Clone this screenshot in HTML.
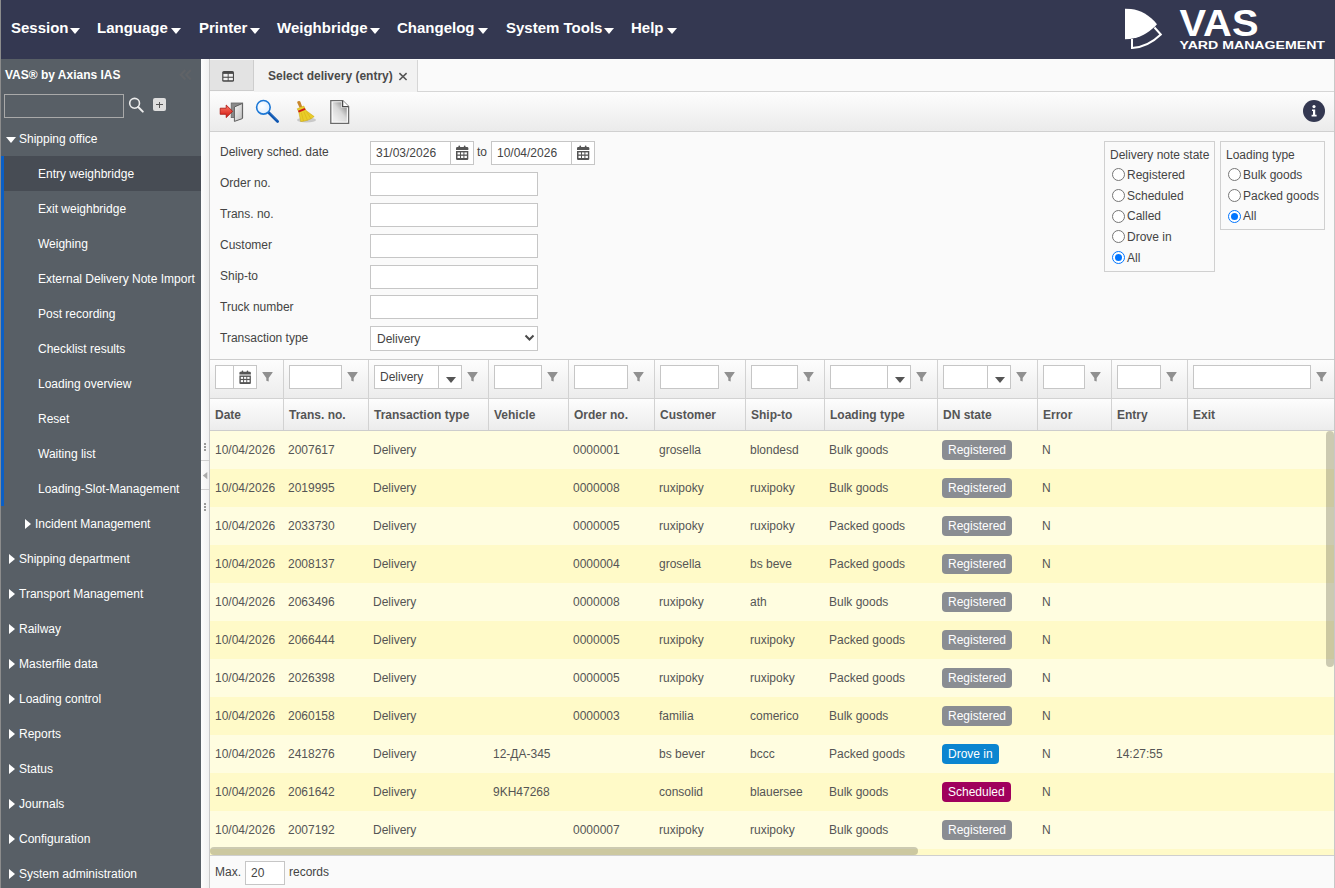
<!DOCTYPE html>
<html><head><meta charset="utf-8">
<style>
*{box-sizing:border-box}
html,body{margin:0;padding:0}
body{width:1335px;height:888px;overflow:hidden;position:relative;font-family:"Liberation Sans",sans-serif;font-size:12px;color:#333;background:#fafafa}
.a{position:absolute}
.t{position:absolute;white-space:nowrap;line-height:12px}
#top{left:0;top:0;width:1335px;height:59px;background:#343851}
.mi{position:absolute;top:20px;font-weight:bold;font-size:15px;line-height:15px;color:#fff;white-space:nowrap}
.car{position:absolute;top:28px;width:0;height:0;border-left:5.5px solid transparent;border-right:5.5px solid transparent;border-top:6px solid #fff}
#side{left:0;top:59px;width:201px;height:829px;background:#585f66}
.si{position:absolute;left:0;width:201px;height:35px;color:#fff;font-size:12px;line-height:12px}
.si span{position:absolute;top:12px;white-space:nowrap}
.trd{position:absolute;width:0;height:0;border-left:5px solid transparent;border-right:5px solid transparent;border-top:6px solid #fff}
.trr{position:absolute;width:0;height:0;border-top:5px solid transparent;border-bottom:5px solid transparent;border-left:6px solid #fff}
.inp{position:absolute;background:#fff;border:1px solid #c6c6c6;height:24px}
.funnel{position:absolute;top:372px;width:11px;height:10px}
.hd{position:absolute;top:409px;font-weight:bold;color:#555;line-height:12px;white-space:nowrap}
.row{position:absolute;left:210px;width:1124px;height:38px}
.row span{position:absolute;top:13px;white-space:nowrap;line-height:12px;color:#555}
.bd{position:absolute;top:9px;height:20px;border-radius:4px;color:#fff;line-height:20px;padding:0 6px;white-space:nowrap}
.lbl{position:absolute;left:220px;line-height:12px;white-space:nowrap;color:#444}
.rad{position:absolute;width:13px;height:13px;border-radius:50%;border:1px solid #767676;background:#fff}
.rad.on{border:1px solid #0075ff;background:#fff}
.rad.on:after{content:"";position:absolute;left:2px;top:2px;width:7px;height:7px;border-radius:50%;background:#0075ff}
</style></head><body>

<!-- top bar -->
<div id="top" class="a">
  <div class="mi" style="left:11px">Session</div><div class="car" style="left:70px"></div>
  <div class="mi" style="left:97px">Language</div><div class="car" style="left:171px"></div>
  <div class="mi" style="left:199px">Printer</div><div class="car" style="left:250px"></div>
  <div class="mi" style="left:277px">Weighbridge</div><div class="car" style="left:370px"></div>
  <div class="mi" style="left:397px">Changelog</div><div class="car" style="left:478px"></div>
  <div class="mi" style="left:506px">System Tools</div><div class="car" style="left:604px"></div>
  <div class="mi" style="left:631px">Help</div><div class="car" style="left:667px"></div>
  <svg class="a" style="left:1115px;top:0" width="220" height="59" viewBox="1115 0 220 59">
    <path d="M1132,39 L1132,48 C1142,47.5 1153,42 1160.8,34.5 L1154.5,27.5" fill="none" stroke="#fff" stroke-width="2"/>
    <path d="M1125,8.8 L1131,9 C1140,10 1150,15 1157,24.3 L1155,26.5 C1148,33 1140,38 1130,38.9 L1125,39.2 Z" fill="#fff"/>
  </svg>
  <svg class="a" style="left:1170px;top:0" width="165" height="59" viewBox="1170 0 165 59"><text x="1179.5" y="35.6" fill="#fff" font-family="Liberation Sans" font-weight="bold" font-size="36" textLength="79" lengthAdjust="spacingAndGlyphs">VAS</text><text x="1179.5" y="48.6" fill="#fff" font-family="Liberation Sans" font-weight="bold" font-size="11.3" textLength="145.5" lengthAdjust="spacingAndGlyphs">YARD MANAGEMENT</text></svg>
  
</div>

<!-- left 1px border -->
<div class="a" style="left:0;top:0;width:1px;height:888px;background:#8c8c8c;z-index:5"></div>

<!-- sidebar -->
<div id="side" class="a">
  <div class="t" style="left:5px;top:10px;font-weight:bold;color:#fff">VAS® by Axians IAS</div>
  <svg class="a" style="left:176px;top:7px" width="20" height="18" viewBox="176 66 20 18"><path d="M185.4,70 L180.8,74.8 L185.4,79.4 M190.8,70 L186.2,74.8 L190.8,79.4" fill="none" stroke="#606367" stroke-width="2.1"/></svg>
  <div class="a" style="left:4px;top:35px;width:120px;height:24px;border:1px solid #a9a9a9"></div>
  <svg class="a" style="left:128px;top:38px" width="16" height="16" viewBox="0 0 16 16"><circle cx="6.6" cy="6.3" r="4.9" fill="none" stroke="#ececec" stroke-width="1.6"/><path d="M10.2,10 L14.8,14.6" stroke="#ececec" stroke-width="2" stroke-linecap="round"/></svg>
  <div class="a" style="left:153px;top:39px;width:13px;height:13px;border-radius:2px;background:#dedede"></div>
  <div class="a" style="left:156px;top:45px;width:7px;height:1px;background:#555"></div>
  <div class="a" style="left:159px;top:43px;width:1px;height:6px;background:#555"></div>
</div>
<div id="menu" class="a" style="left:0;top:0">
  <div class="trd" style="left:6px;top:137px"></div>
  <div class="si" style="top:121px"><span style="left:19px">Shipping office</span></div>
  <div class="a" style="left:1px;top:156px;width:3px;height:350px;background:#0a5fc6"></div>
  <div class="si" style="top:156px;background:#474c54;left:4px;width:197px"><span style="left:34px">Entry weighbridge</span></div>
  <div class="si" style="top:191px"><span style="left:38px">Exit weighbridge</span></div>
  <div class="si" style="top:226px"><span style="left:38px">Weighing</span></div>
  <div class="si" style="top:261px"><span style="left:38px">External Delivery Note Import</span></div>
  <div class="si" style="top:296px"><span style="left:38px">Post recording</span></div>
  <div class="si" style="top:331px"><span style="left:38px">Checklist results</span></div>
  <div class="si" style="top:366px"><span style="left:38px">Loading overview</span></div>
  <div class="si" style="top:401px"><span style="left:38px">Reset</span></div>
  <div class="si" style="top:436px"><span style="left:38px">Waiting list</span></div>
  <div class="si" style="top:471px"><span style="left:38px">Loading-Slot-Management</span></div>
  <div class="trr" style="left:25px;top:519px"></div>
  <div class="si" style="top:506px"><span style="left:35px">Incident Management</span></div>
  <div class="trr" style="left:9px;top:554px"></div>
  <div class="si" style="top:541px"><span style="left:19px">Shipping department</span></div>
  <div class="trr" style="left:9px;top:589px"></div>
  <div class="si" style="top:576px"><span style="left:19px">Transport Management</span></div>
  <div class="trr" style="left:9px;top:624px"></div>
  <div class="si" style="top:611px"><span style="left:19px">Railway</span></div>
  <div class="trr" style="left:9px;top:659px"></div>
  <div class="si" style="top:646px"><span style="left:19px">Masterfile data</span></div>
  <div class="trr" style="left:9px;top:694px"></div>
  <div class="si" style="top:681px"><span style="left:19px">Loading control</span></div>
  <div class="trr" style="left:9px;top:729px"></div>
  <div class="si" style="top:716px"><span style="left:19px">Reports</span></div>
  <div class="trr" style="left:9px;top:764px"></div>
  <div class="si" style="top:751px"><span style="left:19px">Status</span></div>
  <div class="trr" style="left:9px;top:799px"></div>
  <div class="si" style="top:786px"><span style="left:19px">Journals</span></div>
  <div class="trr" style="left:9px;top:834px"></div>
  <div class="si" style="top:821px"><span style="left:19px">Configuration</span></div>
  <div class="trr" style="left:9px;top:869px"></div>
  <div class="si" style="top:856px"><span style="left:19px">System administration</span></div>
</div>

<!-- splitter -->
<div class="a" style="left:201px;top:59px;width:8px;height:829px;background:linear-gradient(90deg,#fdfdfd,#f1f1f1)"></div>
<svg class="a" style="left:201px;top:436px" width="8" height="80" viewBox="201 436 8 80">
<g fill="#9a9a9a"><rect x="204" y="443" width="2" height="2"/><rect x="204" y="446" width="2" height="2"/><rect x="204" y="449" width="2" height="2"/>
<rect x="204" y="503" width="2" height="2"/><rect x="204" y="506" width="2" height="2"/><rect x="204" y="509" width="2" height="2"/></g>
<rect x="201" y="460" width="8" height="1" fill="#cfcfcf"/><rect x="201" y="489" width="8" height="1" fill="#cfcfcf"/>
<path d="M202.8,475.6 L207.3,472 L207.3,479.2 Z" fill="#aaaaaa"/>
</svg>
<div class="a" style="left:209px;top:59px;width:1px;height:829px;background:#c8c8c8"></div>

<!-- content -->
<div id="content">
<svg width="0" height="0" style="position:absolute"><defs>
<symbol id="calico" viewBox="0 0 14 15"><rect x="3.4" y="0.6" width="1.7" height="2.4" rx="0.8" fill="#555"/><rect x="8.8" y="0.6" width="1.7" height="2.4" rx="0.8" fill="#555"/><path d="M1,3.2 Q1,2 2.2,2 L12.1,2 Q13.3,2 13.3,3.2 L13.3,4.9 L1,4.9 Z" fill="#555"/><path d="M1,5.9 L13.3,5.9 L13.3,13.8 Q13.3,15 12.1,15 L2.2,15 Q1,15 1,13.8 Z" fill="#555"/><g fill="#fff"><rect x="2.5" y="7.4" width="2.5" height="2.1"/><rect x="6" y="7.4" width="2.4" height="2.1"/><rect x="9.4" y="7.4" width="2.5" height="2.1"/><rect x="2.5" y="10.8" width="2.5" height="2.2"/><rect x="6" y="10.8" width="2.4" height="2.2"/><rect x="9.4" y="10.8" width="2.5" height="2.2"/></g></symbol>
<symbol id="funico" viewBox="0 0 11 10"><path d="M0.6,0 L10.4,0 Q11,0 10.6,0.6 L6.7,6 L6.7,9.6 L4.3,8.8 L4.3,6 L0.4,0.6 Q0,0 0.6,0 Z" fill="#909090"/></symbol>
</defs></svg>
<div class="a" style="left:210px;top:59px;width:1124px;height:32px;background:#fafafa"></div>
<div class="a" style="left:210px;top:60px;width:44px;height:31px;background:#e3e3e3;border-right:1px solid #cdcdcd;border-bottom:1px solid #cdcdcd"></div>
<svg class="a" style="left:222px;top:70px" width="13" height="13" viewBox="0 0 13 13"><rect x="0.2" y="0.9" width="11.8" height="10.9" rx="1.6" fill="#4a4a4a"/><rect x="1.4" y="3.9" width="4.3" height="2.8" fill="#f2f2f2"/><rect x="6.6" y="3.9" width="4.3" height="2.8" fill="#f2f2f2"/><rect x="1.4" y="7.8" width="4.3" height="2.4" fill="#f2f2f2"/><rect x="6.6" y="7.8" width="4.3" height="2.4" fill="#f2f2f2"/></svg>
<div class="a" style="left:254px;top:60px;width:164px;height:32px;background:#f2f2f2;border-right:1px solid #d6d6d6"></div>
<div class="t" style="left:268px;top:70px;font-weight:bold;color:#4a4a4a">Select delivery (entry)</div>
<svg class="a" style="left:396px;top:70px" width="14" height="14" viewBox="396 70 14 14"><path d="M399.4,73.2 L406.6,80 M406.6,73.2 L399.4,80" stroke="#555" stroke-width="1.6"/></svg>
<div class="a" style="left:418px;top:91px;width:916px;height:1px;background:#d6d6d6"></div>
<div class="a" style="left:210px;top:92px;width:1124px;height:39px;background:linear-gradient(#fdfdfd,#ebebeb)"></div>
<div class="a" style="left:210px;top:131px;width:1124px;height:1px;background:#d0d0d0"></div>
<svg class="a" style="left:218px;top:100px" width="28" height="24" viewBox="218 100 28 24">
<defs><linearGradient id="ar" x1="0" y1="0" x2="0" y2="1"><stop offset="0" stop-color="#ff7a6a"/><stop offset="1" stop-color="#d0150c"/></linearGradient>
<linearGradient id="dl" x1="0" y1="0" x2="1" y2="1"><stop offset="0" stop-color="#f6f6f6"/><stop offset="1" stop-color="#bdbdbd"/></linearGradient></defs>
<rect x="231.2" y="103" width="11.5" height="14.6" fill="#8a8a8a" stroke="#666" stroke-width="0.8"/>
<path d="M234.4,107 L242.4,103.4 L242.4,118.6 L234.4,121.4 Z" fill="url(#dl)" stroke="#5e5e5e" stroke-width="1"/>
<path d="M220.2,108.2 L226.2,108.2 L226.2,105 L232.6,111.3 L226.2,117.6 L226.2,114.3 L220.2,114.3 Z" fill="url(#ar)" stroke="#a8100a" stroke-width="0.8"/>
</svg>
<svg class="a" style="left:252px;top:96px" width="30" height="30" viewBox="252 96 30 30">
<defs><radialGradient id="gl" cx="0.4" cy="0.4" r="0.6"><stop offset="0" stop-color="#ffffff"/><stop offset="1" stop-color="#dfefff"/></radialGradient></defs>
<path d="M268.3,112.3 L277.6,121.6" stroke="#0d55b0" stroke-width="2.8" stroke-linecap="round"/><path d="M270,113.2 L277,120.2" stroke="#5a9ae0" stroke-width="0.7" opacity="0.6"/>
<circle cx="263.4" cy="107.3" r="6.8" fill="url(#gl)" stroke="#1d78d6" stroke-width="1.6"/>
</svg>
<svg class="a" style="left:292px;top:98px" width="28" height="28" viewBox="292 98 28 28">
<ellipse cx="306.5" cy="120" rx="9.5" ry="2.6" fill="#9a9a9a" opacity="0.45"/>
<path d="M297.5,101.5 C298.5,100.5 300,101 300.5,102 L302.2,106.8 L299.6,107.8 L297.4,103 C297.1,102.4 297.1,101.9 297.5,101.5 Z" fill="#c8862c"/>
<path d="M297.2,108.8 L303.8,106 L306,110.5 L314.2,116.6 C311,119.4 305,121.6 300.6,121.6 L298.8,112 Z" fill="#e9cc2a" stroke="#c9a40c" stroke-width="0.5"/>
<path d="M298,110.8 L304.6,107.9 L305.5,109.8 L298.8,112.6 Z" fill="#d01818"/>
<path d="M301.5,113 L303.5,121 M304,112 L307.5,120.5 M306.5,111.5 L311,119" stroke="#d8b414" stroke-width="0.6"/>
</svg>
<svg class="a" style="left:328px;top:98px" width="24" height="28" viewBox="328 98 24 28">
<defs><linearGradient id="dg" x1="0.9" y1="0.1" x2="0.2" y2="0.9"><stop offset="0" stop-color="#8a8a8a"/><stop offset="0.5" stop-color="#d8d8d8"/><stop offset="1" stop-color="#ededed"/></linearGradient></defs>
<path d="M330.8,100.6 L342.6,100.6 L348.6,106.6 L348.6,123.4 L330.8,123.4 Z" fill="#fff" stroke="#6a6a6a" stroke-width="1.3"/>
<path d="M332.6,102.3 L341.4,102.3 L341.4,107.8 L346.8,107.8 L346.8,121.7 L332.6,121.7 Z" fill="url(#dg)"/>
<path d="M342.6,100.6 L342.6,106.6 L348.6,106.6" fill="#fff" stroke="#4a4a4a" stroke-width="1.3"/>
</svg>
<div class="a" style="left:1303px;top:100px;width:22px;height:22px;border-radius:50%;background:#343851"></div>
<svg class="a" style="left:1303px;top:100px" width="22" height="22" viewBox="0 0 22 22"><circle cx="11" cy="6.6" r="1.6" fill="#fff"/><path d="M9,9.5 L12.2,9.5 L12.2,14.8 L13.6,14.8 L13.6,16.4 L8.6,16.4 L8.6,14.8 L10,14.8 L10,11.1 L9,11.1 Z" fill="#fff"/></svg>
<div class="lbl" style="top:146px">Delivery sched. date</div>
<div class="lbl" style="top:177px">Order no.</div>
<div class="lbl" style="top:208px">Trans. no.</div>
<div class="lbl" style="top:239px">Customer</div>
<div class="lbl" style="top:270px">Ship-to</div>
<div class="lbl" style="top:301px">Truck number</div>
<div class="lbl" style="top:332px">Transaction type</div>
<div class="inp" style="left:370px;top:141px;width:104px"></div>
<div class="a" style="left:450px;top:141px;width:1px;height:24px;background:#c6c6c6"></div>
<svg class="a" style="left:455px;top:145px" width="14" height="15"><use href="#calico"/></svg>
<div class="inp" style="left:491px;top:141px;width:104px"></div>
<div class="a" style="left:571px;top:141px;width:1px;height:24px;background:#c6c6c6"></div>
<svg class="a" style="left:576px;top:145px" width="14" height="15"><use href="#calico"/></svg>
<div class="t" style="left:376px;top:147px;color:#444">31/03/2026</div>
<div class="t" style="left:497px;top:147px;color:#444">10/04/2026</div>
<div class="t" style="left:477px;top:146px;color:#444">to</div>
<div class="inp" style="left:370px;top:172px;width:168px"></div>
<div class="inp" style="left:370px;top:203px;width:168px"></div>
<div class="inp" style="left:370px;top:234px;width:168px"></div>
<div class="inp" style="left:370px;top:265px;width:168px"></div>
<div class="inp" style="left:370px;top:295px;width:168px"></div>
<div class="inp" style="left:370px;top:326px;width:168px;height:25px;border-color:#c8c8c8"></div>
<div class="t" style="left:377px;top:333px;color:#444">Delivery</div>
<svg class="a" style="left:523.5px;top:334px" width="11" height="8" viewBox="0 0 11 8"><path d="M1.5,1.5 L5.5,5.5 L9.5,1.5" fill="none" stroke="#4a4a4a" stroke-width="2"/></svg>
<div class="a" style="left:1104px;top:141px;width:111px;height:131px;border:1px solid #d0d0d0"></div>
<div class="t" style="left:1110px;top:149px;color:#444">Delivery note state</div>
<div class="rad" style="left:1112px;top:168px"></div>
<div class="t" style="left:1127px;top:169px;color:#444">Registered</div>
<div class="rad" style="left:1112px;top:189px"></div>
<div class="t" style="left:1127px;top:190px;color:#444">Scheduled</div>
<div class="rad" style="left:1112px;top:210px"></div>
<div class="t" style="left:1127px;top:210px;color:#444">Called</div>
<div class="rad" style="left:1112px;top:230px"></div>
<div class="t" style="left:1127px;top:231px;color:#444">Drove in</div>
<div class="rad on" style="left:1112px;top:251px"></div>
<div class="t" style="left:1127px;top:252px;color:#444">All</div>
<div class="a" style="left:1220px;top:141px;width:105px;height:89px;border:1px solid #d0d0d0"></div>
<div class="t" style="left:1226px;top:149px;color:#444">Loading type</div>
<div class="rad" style="left:1228px;top:168px"></div>
<div class="t" style="left:1243px;top:169px;color:#444">Bulk goods</div>
<div class="rad" style="left:1228px;top:189px"></div>
<div class="t" style="left:1243px;top:190px;color:#444">Packed goods</div>
<div class="rad on" style="left:1228px;top:210px"></div>
<div class="t" style="left:1243px;top:210px;color:#444">All</div>
<div class="a" style="left:210px;top:359px;width:1124px;height:1px;background:#cdcdcd"></div>
<div class="a" style="left:210px;top:360px;width:1124px;height:38px;background:linear-gradient(#fdfdfd,#ececec)"></div>
<div class="a" style="left:210px;top:398px;width:1124px;height:1px;background:#d2d2d2"></div>
<div class="a" style="left:210px;top:399px;width:1124px;height:31px;background:linear-gradient(#fdfdfd,#ececec)"></div>
<div class="a" style="left:210px;top:430px;width:1124px;height:1px;background:#cdcdcd"></div>
<div class="a" style="left:283px;top:360px;width:1px;height:70px;background:#d2d2d2"></div>
<div class="a" style="left:368px;top:360px;width:1px;height:70px;background:#d2d2d2"></div>
<div class="a" style="left:488px;top:360px;width:1px;height:70px;background:#d2d2d2"></div>
<div class="a" style="left:568px;top:360px;width:1px;height:70px;background:#d2d2d2"></div>
<div class="a" style="left:654px;top:360px;width:1px;height:70px;background:#d2d2d2"></div>
<div class="a" style="left:745px;top:360px;width:1px;height:70px;background:#d2d2d2"></div>
<div class="a" style="left:824px;top:360px;width:1px;height:70px;background:#d2d2d2"></div>
<div class="a" style="left:937px;top:360px;width:1px;height:70px;background:#d2d2d2"></div>
<div class="a" style="left:1037px;top:360px;width:1px;height:70px;background:#d2d2d2"></div>
<div class="a" style="left:1111px;top:360px;width:1px;height:70px;background:#d2d2d2"></div>
<div class="a" style="left:1187px;top:360px;width:1px;height:70px;background:#d2d2d2"></div>
<div class="inp" style="left:215px;top:365px;width:42px"></div>
<div class="a" style="left:233px;top:365px;width:1px;height:24px;background:#c6c6c6"></div>
<svg class="a cal" style="left:238px;top:370px" width="14" height="14"><use href="#calico"/></svg>
<svg class="a" style="left:262px;top:372px" width="11" height="10"><use href="#funico"/></svg>
<div class="inp" style="left:289px;top:365px;width:53px"></div>
<svg class="a" style="left:347px;top:372px" width="11" height="10"><use href="#funico"/></svg>
<div class="inp" style="left:374px;top:365px;width:88px"></div>
<div class="a" style="left:438px;top:365px;width:1px;height:24px;background:#c6c6c6"></div>
<div class="a" style="left:446px;top:377px;width:0;height:0;border-left:5px solid transparent;border-right:5px solid transparent;border-top:6px solid #555"></div>
<div class="t" style="left:380px;top:371px;color:#444">Delivery</div>
<svg class="a" style="left:467px;top:372px" width="11" height="10"><use href="#funico"/></svg>
<div class="inp" style="left:494px;top:365px;width:48px"></div>
<svg class="a" style="left:547px;top:372px" width="11" height="10"><use href="#funico"/></svg>
<div class="inp" style="left:574px;top:365px;width:54px"></div>
<svg class="a" style="left:633px;top:372px" width="11" height="10"><use href="#funico"/></svg>
<div class="inp" style="left:660px;top:365px;width:59px"></div>
<svg class="a" style="left:724px;top:372px" width="11" height="10"><use href="#funico"/></svg>
<div class="inp" style="left:751px;top:365px;width:47px"></div>
<svg class="a" style="left:803px;top:372px" width="11" height="10"><use href="#funico"/></svg>
<div class="inp" style="left:830px;top:365px;width:81px"></div>
<div class="a" style="left:887px;top:365px;width:1px;height:24px;background:#c6c6c6"></div>
<div class="a" style="left:895px;top:377px;width:0;height:0;border-left:5px solid transparent;border-right:5px solid transparent;border-top:6px solid #555"></div>
<svg class="a" style="left:916px;top:372px" width="11" height="10"><use href="#funico"/></svg>
<div class="inp" style="left:943px;top:365px;width:68px"></div>
<div class="a" style="left:987px;top:365px;width:1px;height:24px;background:#c6c6c6"></div>
<div class="a" style="left:995px;top:377px;width:0;height:0;border-left:5px solid transparent;border-right:5px solid transparent;border-top:6px solid #555"></div>
<svg class="a" style="left:1016px;top:372px" width="11" height="10"><use href="#funico"/></svg>
<div class="inp" style="left:1043px;top:365px;width:42px"></div>
<svg class="a" style="left:1090px;top:372px" width="11" height="10"><use href="#funico"/></svg>
<div class="inp" style="left:1117px;top:365px;width:44px"></div>
<svg class="a" style="left:1166px;top:372px" width="11" height="10"><use href="#funico"/></svg>
<div class="inp" style="left:1193px;top:365px;width:118px"></div>
<svg class="a" style="left:1316px;top:372px" width="11" height="10"><use href="#funico"/></svg>
<div class="hd" style="left:215px">Date</div>
<div class="hd" style="left:289px">Trans. no.</div>
<div class="hd" style="left:374px">Transaction type</div>
<div class="hd" style="left:494px">Vehicle</div>
<div class="hd" style="left:574px">Order no.</div>
<div class="hd" style="left:660px">Customer</div>
<div class="hd" style="left:751px">Ship-to</div>
<div class="hd" style="left:830px">Loading type</div>
<div class="hd" style="left:943px">DN state</div>
<div class="hd" style="left:1043px">Error</div>
<div class="hd" style="left:1117px">Entry</div>
<div class="hd" style="left:1193px">Exit</div>
<div class="row" style="top:431px;background:#fffde0"><span style="left:5px">10/04/2026</span><span style="left:78px">2007617</span><span style="left:163px">Delivery</span><span style="left:363px">0000001</span><span style="left:449px">grosella</span><span style="left:540px">blondesd</span><span style="left:619px">Bulk goods</span><div class="bd" style="left:732px;background:#8a8d92">Registered</div><span style="left:832px">N</span></div>
<div class="row" style="top:469px;background:#fffac8"><span style="left:5px">10/04/2026</span><span style="left:78px">2019995</span><span style="left:163px">Delivery</span><span style="left:363px">0000008</span><span style="left:449px">ruxipoky</span><span style="left:540px">ruxipoky</span><span style="left:619px">Bulk goods</span><div class="bd" style="left:732px;background:#8a8d92">Registered</div><span style="left:832px">N</span></div>
<div class="row" style="top:507px;background:#fffde0"><span style="left:5px">10/04/2026</span><span style="left:78px">2033730</span><span style="left:163px">Delivery</span><span style="left:363px">0000005</span><span style="left:449px">ruxipoky</span><span style="left:540px">ruxipoky</span><span style="left:619px">Packed goods</span><div class="bd" style="left:732px;background:#8a8d92">Registered</div><span style="left:832px">N</span></div>
<div class="row" style="top:545px;background:#fffac8"><span style="left:5px">10/04/2026</span><span style="left:78px">2008137</span><span style="left:163px">Delivery</span><span style="left:363px">0000004</span><span style="left:449px">grosella</span><span style="left:540px">bs beve</span><span style="left:619px">Packed goods</span><div class="bd" style="left:732px;background:#8a8d92">Registered</div><span style="left:832px">N</span></div>
<div class="row" style="top:583px;background:#fffde0"><span style="left:5px">10/04/2026</span><span style="left:78px">2063496</span><span style="left:163px">Delivery</span><span style="left:363px">0000008</span><span style="left:449px">ruxipoky</span><span style="left:540px">ath</span><span style="left:619px">Bulk goods</span><div class="bd" style="left:732px;background:#8a8d92">Registered</div><span style="left:832px">N</span></div>
<div class="row" style="top:621px;background:#fffac8"><span style="left:5px">10/04/2026</span><span style="left:78px">2066444</span><span style="left:163px">Delivery</span><span style="left:363px">0000005</span><span style="left:449px">ruxipoky</span><span style="left:540px">ruxipoky</span><span style="left:619px">Packed goods</span><div class="bd" style="left:732px;background:#8a8d92">Registered</div><span style="left:832px">N</span></div>
<div class="row" style="top:659px;background:#fffde0"><span style="left:5px">10/04/2026</span><span style="left:78px">2026398</span><span style="left:163px">Delivery</span><span style="left:363px">0000005</span><span style="left:449px">ruxipoky</span><span style="left:540px">ruxipoky</span><span style="left:619px">Packed goods</span><div class="bd" style="left:732px;background:#8a8d92">Registered</div><span style="left:832px">N</span></div>
<div class="row" style="top:697px;background:#fffac8"><span style="left:5px">10/04/2026</span><span style="left:78px">2060158</span><span style="left:163px">Delivery</span><span style="left:363px">0000003</span><span style="left:449px">familia</span><span style="left:540px">comerico</span><span style="left:619px">Bulk goods</span><div class="bd" style="left:732px;background:#8a8d92">Registered</div><span style="left:832px">N</span></div>
<div class="row" style="top:735px;background:#fffde0"><span style="left:5px">10/04/2026</span><span style="left:78px">2418276</span><span style="left:163px">Delivery</span><span style="left:283px">12-ДА-345</span><span style="left:449px">bs bever</span><span style="left:540px">bccc</span><span style="left:619px">Packed goods</span><div class="bd" style="left:732px;background:#0b85d0">Drove in</div><span style="left:832px">N</span><span style="left:906px">14:27:55</span></div>
<div class="row" style="top:773px;background:#fffac8"><span style="left:5px">10/04/2026</span><span style="left:78px">2061642</span><span style="left:163px">Delivery</span><span style="left:283px">9KH47268</span><span style="left:449px">consolid</span><span style="left:540px">blauersee</span><span style="left:619px">Bulk goods</span><div class="bd" style="left:732px;background:#a0005c">Scheduled</div><span style="left:832px">N</span></div>
<div class="row" style="top:811px;background:#fffde0"><span style="left:5px">10/04/2026</span><span style="left:78px">2007192</span><span style="left:163px">Delivery</span><span style="left:363px">0000007</span><span style="left:449px">ruxipoky</span><span style="left:540px">ruxipoky</span><span style="left:619px">Bulk goods</span><div class="bd" style="left:732px;background:#8a8d92">Registered</div><span style="left:832px">N</span></div>
<div class="row" style="top:849px;height:6px;background:#fffac8"></div>
<div class="a" style="left:210px;top:855px;width:1124px;height:1px;background:#cfcfcf"></div>
<div class="a" style="left:210px;top:847px;width:708px;height:8px;border-radius:4px;background:rgba(65,68,50,0.27)"></div>
<div class="a" style="left:1326px;top:431px;width:8px;height:236px;border-radius:4px;background:rgba(65,68,50,0.27)"></div>
<div class="t" style="left:215px;top:866px;color:#444">Max.</div>
<div class="inp" style="left:245px;top:861px;width:40px"></div>
<div class="t" style="left:251px;top:867px;color:#444">20</div>
<div class="t" style="left:289px;top:866px;color:#444">records</div>
<div class="a" style="left:1334px;top:59px;width:1px;height:829px;background:#c8c8c8"></div>
</div>

</body></html>
